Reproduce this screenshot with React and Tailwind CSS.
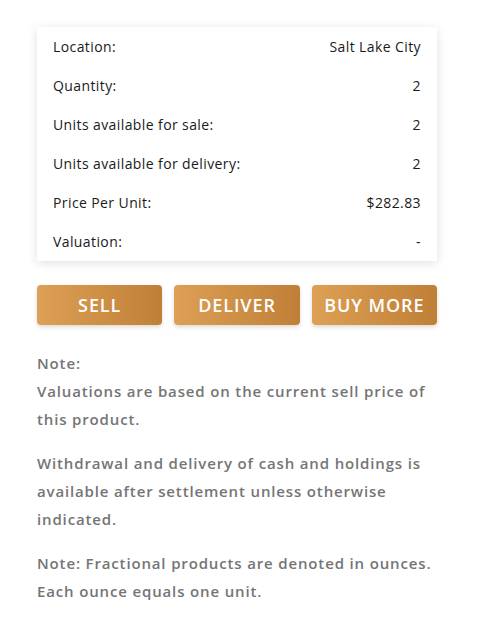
import React from 'react';

const rows = [
  { label: 'Location:', value: 'Salt Lake City' },
  { label: 'Quantity:', value: '2' },
  { label: 'Units available for sale:', value: '2' },
  { label: 'Units available for delivery:', value: '2' },
  { label: 'Price Per Unit:', value: '$282.83' },
  { label: 'Valuation:', value: '-' },
];

const actions = ['SELL', 'DELIVER', 'BUY MORE'];

const DetailsCard = () => (
  <div className="w-[400px] bg-white shadow-[0_2px_10px_rgba(0,0,0,0.12)]">
    {rows.map((row) => (
      <div key={row.label} className="flex h-[39px] items-center justify-between px-4 text-[14px] tracking-[0.4px] text-[#1a1a1a]">
        <span>{row.label}</span>
        <span>{row.value}</span>
      </div>
    ))}
  </div>
);

const ActionButtons = () => (
  <div className="mt-6 grid w-[400px] grid-cols-3 gap-3">
    {actions.map((label) => (
      <button
        key={label}
        className="h-10 rounded-[4px] bg-gradient-to-r from-[#dda055] to-[#c07f36] text-[18px] font-semibold tracking-[0.9px] text-white shadow-[0_2px_4px_rgba(0,0,0,0.15)]"
      >
        {label}
      </button>
    ))}
  </div>
);

const Notes = () => (
  <div className="mt-6 w-[400px] space-y-4 text-[15px] font-semibold leading-[28px] tracking-[0.85px] text-[#757575]">
    <p>
      Note:
      <br />
      Valuations are based on the current sell price of this product.
    </p>
    <p>Withdrawal and delivery of cash and holdings is available after settlement unless otherwise indicated.</p>
    <p>Note: Fractional products are denoted in ounces. Each ounce equals one unit.</p>
  </div>
);

export default function App() {
  return (
    <div className="min-h-screen bg-white pl-[37px] pt-[27px] font-['Open_Sans',sans-serif]">
      <DetailsCard />
      <ActionButtons />
      <Notes />
    </div>
  );
}
